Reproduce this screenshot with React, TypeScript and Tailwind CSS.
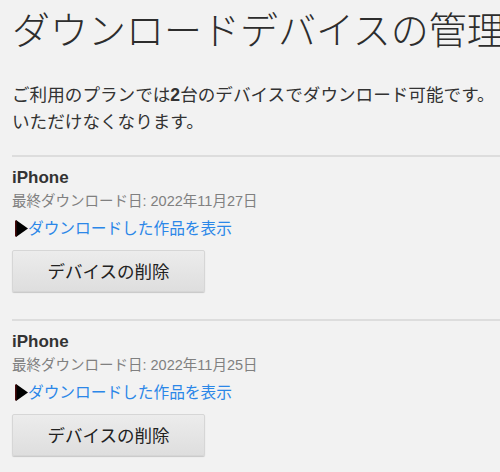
import React from 'react';

const devices = [
  { id: 1, name: 'iPhone', lastDownload: '27' },
  { id: 2, name: 'iPhone', lastDownload: '25' },
];

const jp = "font-['Noto_Sans_CJK_JP',sans-serif]";
const latin = "font-['Liberation_Sans',sans-serif]";

const Triangle = () => (
  <svg width="13" height="17" viewBox="0 0 13 17" className="shrink-0">
    <polygon points="1,0 13,8.5 1,17" fill="#000" />
    <rect x="0" y="0.5" width="1.5" height="16" fill="#4a0a0a" />
  </svg>
);

const App = () => {
  return (
    <div className="w-[500px] h-[472px] overflow-hidden bg-[#f2f2f2]">
      <div className={`w-[900px] pl-3 text-[#333] ${jp}`}>
        {/* Header */}
        <h1 className="pt-[5px] text-[38px] leading-[46px] font-light whitespace-nowrap text-[#2d2d2d]">
          ダウンロードデバイスの管理
        </h1>
        <p className="mt-[30px] text-[17.6px] leading-[25px] whitespace-nowrap">
          ご利用のプランでは<span className={`font-bold ${latin}`}>2</span>台のデバイスでダウンロード可能です。
          <br />
          いただけなくなります。
        </p>

        {/* Device list */}
        <div className="mt-[22px]">
          {devices.map((d) => (
            <div key={d.id} className="border-t-2 border-[#dddddd] pt-[9px] pb-[27px]">
              <div className={`${latin} font-bold text-[17px] leading-[24px] text-[#333]`}>
                {d.name}
              </div>
              <div className="text-[14.5px] leading-[20px] text-[#808080]">
                最終ダウンロード日<span className={latin}>: 2022</span>年<span className={latin}>11</span>月<span className={latin}>{d.lastDownload}</span>日
              </div>
              <a href="#" className="mt-[5px] flex items-center pl-[3px] h-[24px] text-[15.7px] text-[#2b87e8] no-underline">
                <Triangle />
                <span className="leading-[24px]">ダウンロードした作品を表示</span>
              </a>
              <button className="mt-[10px] w-[193px] h-[42px] rounded-[2px] bg-gradient-to-b from-[#ececec] to-[#dedede] border border-[#d6d6d6] shadow-[0_1px_1px_rgba(0,0,0,0.18)] text-[17.5px] text-[#222]">
                デバイスの削除
              </button>
            </div>
          ))}
        </div>
      </div>
    </div>
  );
};

export default App;
